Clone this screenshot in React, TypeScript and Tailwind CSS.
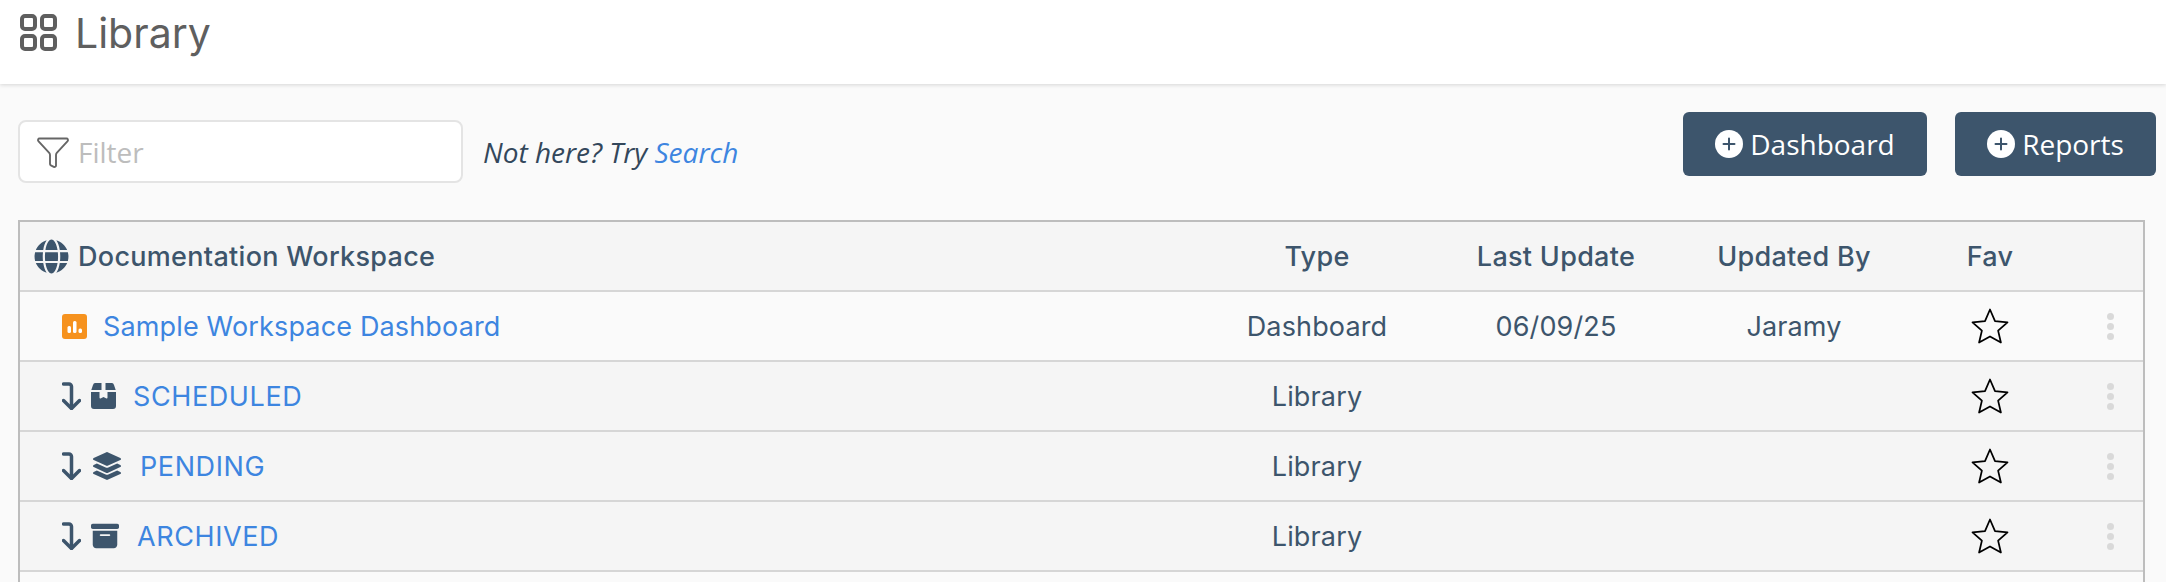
import { Filter } from "lucide-react";
import { FaGlobe, FaLayerGroup } from "react-icons/fa";
import { FaBoxArchive } from "react-icons/fa6";

const GRID = "grid grid-cols-[1fr_240px_238px_238px_154px_76px] items-center";
const CELL = "text-center pt-[2px]";

function GridIcon() {
    return (
        <svg viewBox="0 0 37 37" className="w-[37px] h-[37px] shrink-0" fill="none" stroke="#5f5f5f" strokeWidth="4">
            <rect x="2" y="2" width="13" height="13" rx="3" />
            <rect x="22" y="2" width="13" height="13" rx="3" />
            <rect x="2" y="22" width="13" height="13" rx="3" />
            <rect x="22" y="22" width="13" height="13" rx="3" />
        </svg>
    );
}

function DrillArrow() {
    return (
        <svg viewBox="0 0 19 28" className="w-[19px] h-[28px] shrink-0" fill="none" stroke="#3d556c" strokeWidth="3.5" strokeLinecap="round" strokeLinejoin="round">
            <path d="M1.5 2H7a2.5 2.5 0 0 1 2.5 2.5V26" />
            <path d="M1.5 18.5L9.5 26.5L17.5 18.5" />
        </svg>
    );
}

function ChartIcon() {
    return (
        <svg viewBox="0 0 25 25" className="w-[25px] h-[25px] shrink-0">
            <rect width="25" height="25" rx="3" fill="#f6921e" />
            <rect x="5.5" y="12" width="3.5" height="7" rx="1.5" fill="#fff" />
            <rect x="11" y="7" width="3.5" height="12" rx="1.5" fill="#fff" />
            <rect x="16.5" y="14.5" width="3.5" height="4.5" rx="1.5" fill="#fff" />
        </svg>
    );
}

function BoxIcon() {
    return (
        <svg viewBox="0 0 25 26" className="w-[25px] h-[26px] block" fill="#3d556c">
            <path d="M4 0H10.5V7H0.3L2 2Q2.6 0 4 0Z" />
            <path d="M14.5 0H21Q22.4 0 23 2L24.7 7H14.5Z" />
            <path d="M0 9H8.5V14.5Q8.5 16 10 15.3L12.5 14L15 15.3Q16.5 16 16.5 14.5V9H25V23Q25 26 22 26H3Q0 26 0 23Z" />
        </svg>
    );
}

function PlusCircle() {
    return (
        <svg viewBox="0 0 28 28" className="w-[28px] h-[28px] shrink-0">
            <circle cx="14" cy="14" r="14" fill="#fff" />
            <path d="M14 8.5V19.5M8.5 14H19.5" stroke="#3d556c" strokeWidth="2" strokeLinecap="round" />
        </svg>
    );
}

function StarIcon() {
    return (
        <svg viewBox="0 0 38 36" className="w-[38px] h-[36px]" fill="none" stroke="#000" strokeWidth="1.75" strokeLinejoin="round">
            <path d="M19 1.5L24 13.1L36.5 14.3L27.1 22.6L29.9 34.5L19 28.5L8.1 34.5L10.9 22.6L1.5 14.3L14 13.1Z" />
        </svg>
    );
}

function RowEnd() {
    return (
        <>
            <div className="flex justify-center">
                <StarIcon />
            </div>
            <div className="flex flex-col items-end gap-[3px] pr-[29px]">
                <span className="w-[7px] h-[7px] rounded-full bg-[#d9d9d9]" />
                <span className="w-[7px] h-[7px] rounded-full bg-[#d9d9d9]" />
                <span className="w-[7px] h-[7px] rounded-full bg-[#d9d9d9]" />
            </div>
        </>
    );
}

const folders = [
    { name: "SCHEDULED", icon: <BoxIcon />, pad: "ml-[10px] mr-[17px]" },
    { name: "PENDING", icon: <FaLayerGroup className="w-[28px] h-[28px] text-[#3d556c]" />, pad: "ml-[12px] mr-[19px]" },
    { name: "ARCHIVED", icon: <FaBoxArchive className="w-[28px] h-[28px] text-[#3d556c]" />, pad: "ml-[10px] mr-[18px]" },
];

export default function App() {
    return (
        <div className="h-screen overflow-hidden bg-[#fafafa] font-['Inter',sans-serif] text-[#3d556c]">
            <header className="h-[84px] bg-white shadow-[0_1px_4px_rgba(0,0,0,0.15)] flex items-start pt-[14px] pl-[20px] gap-[18px]">
                <GridIcon />
                <h1 className="text-[41px] leading-[38px] text-[#5f5f5f]">Library</h1>
            </header>

            <div className="pl-[18px] pr-[10px] pt-[28px] flex items-start justify-between">
                <div className="flex items-center mt-[8px]">
                    <div className="w-[445px] h-[63px] bg-white border-2 border-[#e4e4e4] rounded-lg flex items-center pl-[15px] gap-[7px]">
                        <Filter className="w-[36px] h-[36px] text-[#666]" strokeWidth={1.25} />
                        <span className="font-['Open_Sans',sans-serif] text-[28px] text-[#bdbdbd]">Filter</span>
                    </div>
                    <p className="ml-[20px] font-['Open_Sans',sans-serif] italic text-[28px] text-[#33475b]">
                        Not here? Try <a className="text-[#3d85e0]">Search</a>
                    </p>
                </div>
                <div className="flex gap-[28px] font-['Open_Sans',sans-serif] text-[28px] text-white">
                    <button className="w-[244px] h-[64px] bg-[#3d556c] rounded-md flex items-center justify-center gap-[7px]">
                        <PlusCircle /> Dashboard
                    </button>
                    <button className="w-[201px] h-[64px] bg-[#3d556c] rounded-md flex items-center justify-center gap-[7px]">
                        <PlusCircle /> Reports
                    </button>
                </div>
            </div>

            <div className="ml-[18px] mr-[21px] mt-[37px] border-2 border-[#bdbdbd] text-[27px] tracking-[0.15px]">
                <div className={`${GRID} h-[70px] bg-[#f5f5f5] border-b-2 border-[#d6d6d6] font-medium tracking-[0.3px]`}>
                    <div className="flex items-center pl-[14px] gap-[9px]">
                        <FaGlobe className="w-[35px] h-[35px]" />
                        <span className="pt-[2px]">Documentation Workspace</span>
                    </div>
                    <div className={CELL}>Type</div>
                    <div className={CELL}>Last Update</div>
                    <div className={CELL}>Updated By</div>
                    <div className={CELL}>Fav</div>
                    <div />
                </div>

                <div className={`${GRID} h-[70px] bg-[#fafafa] border-b-2 border-[#d6d6d6]`}>
                    <div className="flex items-center pl-[42px] gap-[16px]">
                        <ChartIcon />
                        <a className="text-[#3d85e0] pt-[2px]">Sample Workspace Dashboard</a>
                    </div>
                    <div className={CELL}>Dashboard</div>
                    <div className={CELL}>06/09/25</div>
                    <div className={CELL}>Jaramy</div>
                    <RowEnd />
                </div>

                {folders.map(f => (
                    <div key={f.name} className={`${GRID} h-[70px] bg-[#f5f5f5] border-b-2 border-[#d6d6d6]`}>
                        <div className="flex items-center pl-[42px]">
                            <DrillArrow />
                            <span className={f.pad}>{f.icon}</span>
                            <a className="text-[#3d85e0] pt-[2px] tracking-[0.6px]">{f.name}</a>
                        </div>
                        <div className={CELL}>Library</div>
                        <div />
                        <div />
                        <RowEnd />
                    </div>
                ))}

                <div className="h-[70px] bg-[#fafafa]" />
            </div>
        </div>
    );
}
